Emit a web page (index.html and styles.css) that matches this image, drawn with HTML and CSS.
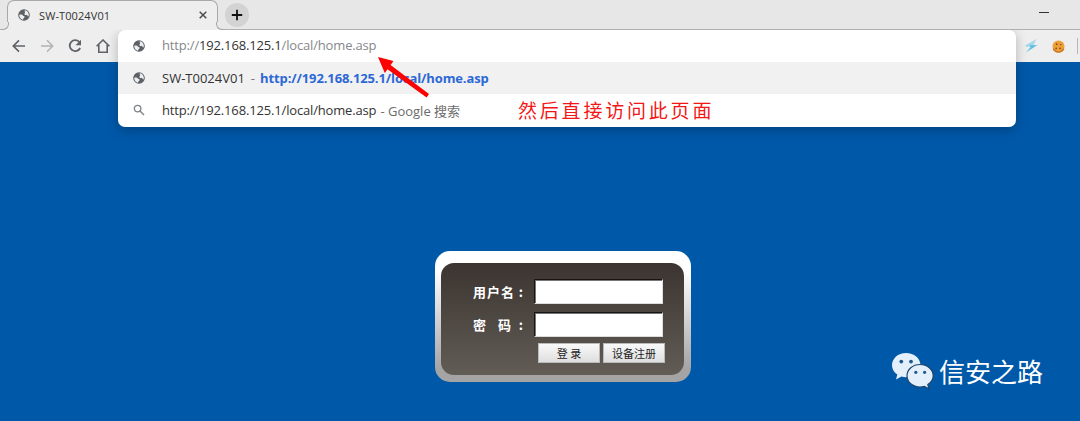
FILE: index.html
```html
<!DOCTYPE html>
<html lang="zh-CN">
<head>
<meta charset="utf-8">
<title>SW-T0024V01</title>
<link rel="stylesheet" href="styles.css">
</head>
<body>
<svg class="defs" width="0" height="0" aria-hidden="true">
  <symbol id="globe" viewBox="0 0 14 14"><circle cx="7" cy="7" r="6.800" fill="#5c6166"/><path fill="#eee" d="M1.500 6.600c1.800-.5 3.600-.1 4.200 1 .5.900 1.700.5 2 1.500.3 1.200-1.300 1.300-1.500 2.300-.1.600-.2.900-.6 1.100C3 11.700 1.300 9.400 1.500 6.600zM8 1.600c2.600.4 4.600 2.600 4.600 5.400 0 .7-.1 1.200-.3 1.700-.9-.2-1.200-1.500-2.300-1.700-1-.2-2.200.1-2.500-.8-.3-.9.800-1.200.8-2 0-.9-1-1.300-.3-2.600z"/></symbol>
</svg>
<header class="tabstrip">
  <div class="tab">
    <svg class="globe"><use href="#globe"/></svg>
    <span class="tab-title">SW-T0024V01</span>
    <svg class="close" viewBox="0 0 8 8"><path d="M.7.7l6.600 6.600M7.300.7L.7 7.300" stroke="#4a4d50" stroke-width="1.500"/></svg>
  </div>
  <div class="new-tab"><svg width="12" height="12" viewBox="0 0 12 12"><path d="M6 .8v10.400M.8 6h10.400" stroke="#111" stroke-width="1.800"/></svg></div>
  <div class="minimize"></div>
</header>
<nav class="toolbar">
  <div class="nav-icons">
    <svg viewBox="0 0 14 14"><path d="M13 7H1.500M7 1.300L1.300 7 7 12.700" fill="none" stroke="#5f6368" stroke-width="1.700"/></svg>
    <svg viewBox="0 0 14 14"><path d="M1 7h11.500M7 1.300L12.700 7 7 12.700" fill="none" stroke="#b2b3b4" stroke-width="1.500"/></svg>
    <svg viewBox="0 0 14 14"><path d="M11.600 3.200A5.500 5.500 0 1 0 12.200 9" fill="none" stroke="#5f6368" stroke-width="1.800"/><path d="M13 .7v5.500H7.500z" fill="#5f6368"/></svg>
    <svg viewBox="0 0 14 14"><path d="M.6 7.200L7 1l6.400 6.200M2.800 5.800v7.400h8.400V5.800" fill="none" stroke="#5f6368" stroke-width="1.600"/></svg>
  </div>
  <div class="extensions">
    <svg width="14" height="14" viewBox="0 0 14 14"><path d="M12.500 0L1 6.500l2 1.500 6-1z" fill="#a5d9ea"/><path d="M13.500 6L5 6.200l1.500 2L2 13.500z" fill="#62bfe4"/></svg>
    <svg width="13" height="13" viewBox="0 0 14 14"><circle cx="7" cy="7" r="6.500" fill="#eda03a"/><path d="M1.500 9.500a6 6 0 0 0 11 0" fill="none" stroke="#c8701c" stroke-width="1.500"/><g fill="#8a4512"><circle cx="5" cy="4.500" r="1"/><circle cx="9.500" cy="4.800" r=".8"/><circle cx="4.500" cy="9" r=".9"/><circle cx="8.700" cy="9" r="1"/></g></svg>
    <i class="divider"></i>
  </div>
</nav>
<section class="omnibox">
  <div class="row"><svg class="globe"><use href="#globe"/></svg><span class="url"><span class="grey">http://</span>192.168.125.1<span class="grey">/local/home.asp</span></span></div>
  <div class="row selected"><svg class="globe"><use href="#globe"/></svg><span class="name">SW-T0024V01</span><span class="dash">-</span><b class="match">http://192.168.125.1/local/home.asp</b></div>
  <div class="row"><svg class="globe" viewBox="0 0 12 12"><circle cx="4.600" cy="4.600" r="3.300" fill="none" stroke="#808387" stroke-width="1.300"/><path d="M7 7l4 4" stroke="#808387" stroke-width="1.500"/></svg><span class="url">http://192.168.125.1/local/home.asp</span><span class="hint">- Google 搜索</span></div>
  <svg class="arrow" width="54" height="42" viewBox="0 0 54 42"><path d="M1 0l15.500 4-2.900 4.100L52 37l-2.400 3.500L10.500 12.300 7.800 16z" fill="#fe0000"/></svg>
  <p class="note">然后直接访问此页面</p>
</section>
<main class="page">
  <form class="login">
    <div class="panel">
      <label class="field"><span class="caption">用户名<i>:</i></span><input type="text"></label>
      <label class="field"><span class="caption"><span class="spaced">密</span>码<i>:</i></span><input type="password"></label>
      <div class="buttons"><button type="button">登 录</button><button type="button">设备注册</button></div>
    </div>
  </form>
  <div class="brand">
    <svg width="43" height="38" viewBox="0 0 43 38"><path d="M15 1C7 1 1 6.500 1 13.200c0 4 2 7.200 5.300 9.400L5 27.500l5.500-3a18 18 0 0 0 4.500.7C23 25.200 29.500 20 29.500 13.200S23 1 15 1z" fill="#e3effa"/><path d="M29 12.500c-7.300 0-13 5-13 11.300S21.700 35 29 35c1.600 0 3-.2 4.300-.7l4.700 2.500-1.200-4.200c3.300-2 5.400-5.200 5.400-8.800 0-6.300-5.900-11.300-13.200-11.300z" fill="#e3effa" stroke="#20456d" stroke-width="1.200"/><g fill="#20588d"><circle cx="10.300" cy="9.600" r="1.900"/><circle cx="20" cy="9.600" r="1.900"/><circle cx="24.800" cy="20.300" r="1.600"/><circle cx="33.600" cy="20.300" r="1.600"/></g></svg>
    <span>信安之路</span>
  </div>
</main>
</body>
</html>
```
FILE: styles.css
```css
* { box-sizing: border-box; }
body { margin: 0; height: 421px; overflow: hidden; position: relative; background: #0058a9; font-family: "Open Sans", "Noto Sans CJK SC", sans-serif; font-size: 13px; color: #333; }
svg { display: block; flex: none; }
.defs { position: absolute; }
.tabstrip { display: flex; height: 30px; background: #e7e7e7; border-bottom: 1px solid #b0b0b0; }
.tab { position: relative; display: flex; align-items: center; width: 211px; height: 30px; margin-left: 7px; padding: 0 10px; background: #eee; border: 1px solid #a8a8a8; border-bottom: 0; border-radius: 7px 7px 0 0; }
.tab::before, .tab::after { content: ""; position: absolute; bottom: 0; width: 7px; height: 7px; border-bottom: 1px solid #a8a8a8; background: #e7e7e7; }
.tab::before { left: -7px; border-right: 1px solid #a8a8a8; border-bottom-right-radius: 6px; box-shadow: 3px 3px 0 -1px #eee; }
.tab::after { right: -7px; border-left: 1px solid #a8a8a8; border-bottom-left-radius: 6px; box-shadow: -3px 3px 0 -1px #eee; }
.globe { width: 12px; height: 12px; }
.tab .globe { margin-top: -2px; }
.tab-title { flex: 1; margin: -1px 0 0 9px; font-size: 11px; letter-spacing: .1px; }
.close { width: 8px; height: 8px; margin-top: -1px; }
.new-tab { display: grid; place-items: center; width: 24px; height: 24px; margin: 3px 0 0 7px; border-radius: 50%; background: #d3d3d3; }
.minimize { width: 10px; height: 1px; margin: 12px 31px 0 auto; background: #333; }
.toolbar { display: flex; justify-content: space-between; align-items: center; height: 32px; padding-left: 12px; background: #eee; }
.nav-icons { display: flex; gap: 14px; }
.nav-icons svg { width: 14px; height: 14px; }
.extensions { display: flex; align-items: center; gap: 14px; padding-right: 2px; }
.divider { width: 1px; height: 16px; margin-left: -2px; background: #b8b8b8; }
.omnibox { position: absolute; z-index: 1; left: 118px; top: 30px; width: 898px; height: 97px; border-radius: 7px; background: #fff; box-shadow: 0 3px 12px rgba(0, 0, 0, .25); clip-path: inset(0 -20px -25px -20px); }
.row { display: flex; align-items: center; height: 32px; padding-left: 15px; }
.selected { height: 32px; background: #f1f1f1; }
.row .globe { margin-right: 17px; }
.row:first-child .url { margin-top: -2px; }
.grey { color: #85888c; }
.url { letter-spacing: -.16px; }
.dash { margin: 0 5px 0 6px; color: #777; }
.match { color: #2c68d5; font-weight: 700; letter-spacing: -.11px; }
.hint { margin-left: 4px; color: #6c6c6c; font-size: 13px; }
.arrow { position: absolute; left: 259px; top: 27px; }
.note { position: absolute; left: 400px; top: 67px; margin: 0; color: #f21616; font: 19px/29px "Liberation Serif", "Noto Sans CJK SC", serif; letter-spacing: 2.800px; white-space: nowrap; }
.page { height: 359px; position: relative; padding-top: 189px; }
.login { width: 256px; height: 131px; margin-left: 435px; padding: 12px 7px 7px 6px; border-radius: 15px; background: linear-gradient(#fff 15%, #a4a4a4 90%); }
.panel { height: 112px; padding: 16px 21px 0 25px; border-radius: 13px; background: linear-gradient(#3b3430, #625c56); }
.field { display: flex; justify-content: space-between; align-items: center; height: 25px; margin-bottom: 8px; padding-left: 7px; color: #fff; font: bold 13px "Noto Sans CJK SC", sans-serif; white-space: nowrap; }
.caption { display: flex; gap: 1px; width: 51px; letter-spacing: 1px; }
.caption i { margin-left: auto; font-style: normal; }
.spaced { margin-right: 10px; }
.field input { width: 129px; height: 25px; border: 1px solid; border-color: #171412 #ddd #ddd #171412; background: #fff; box-shadow: inset 1px 1px #777; outline: 0; }
.buttons { display: flex; justify-content: flex-end; gap: 3px; margin: -2px -2px 0 0; }
button { width: 62px; height: 20px; padding: 0; border: 1px solid #bbb; background: linear-gradient(#f9f9f9, #dedede); color: #222; font: 11px/16px "Noto Sans CJK SC", sans-serif; }
.brand { position: absolute; left: 891px; top: 290px; display: flex; align-items: center; gap: 5px; color: #fff; font: 26px/38px "Noto Sans CJK SC", sans-serif; }
```
